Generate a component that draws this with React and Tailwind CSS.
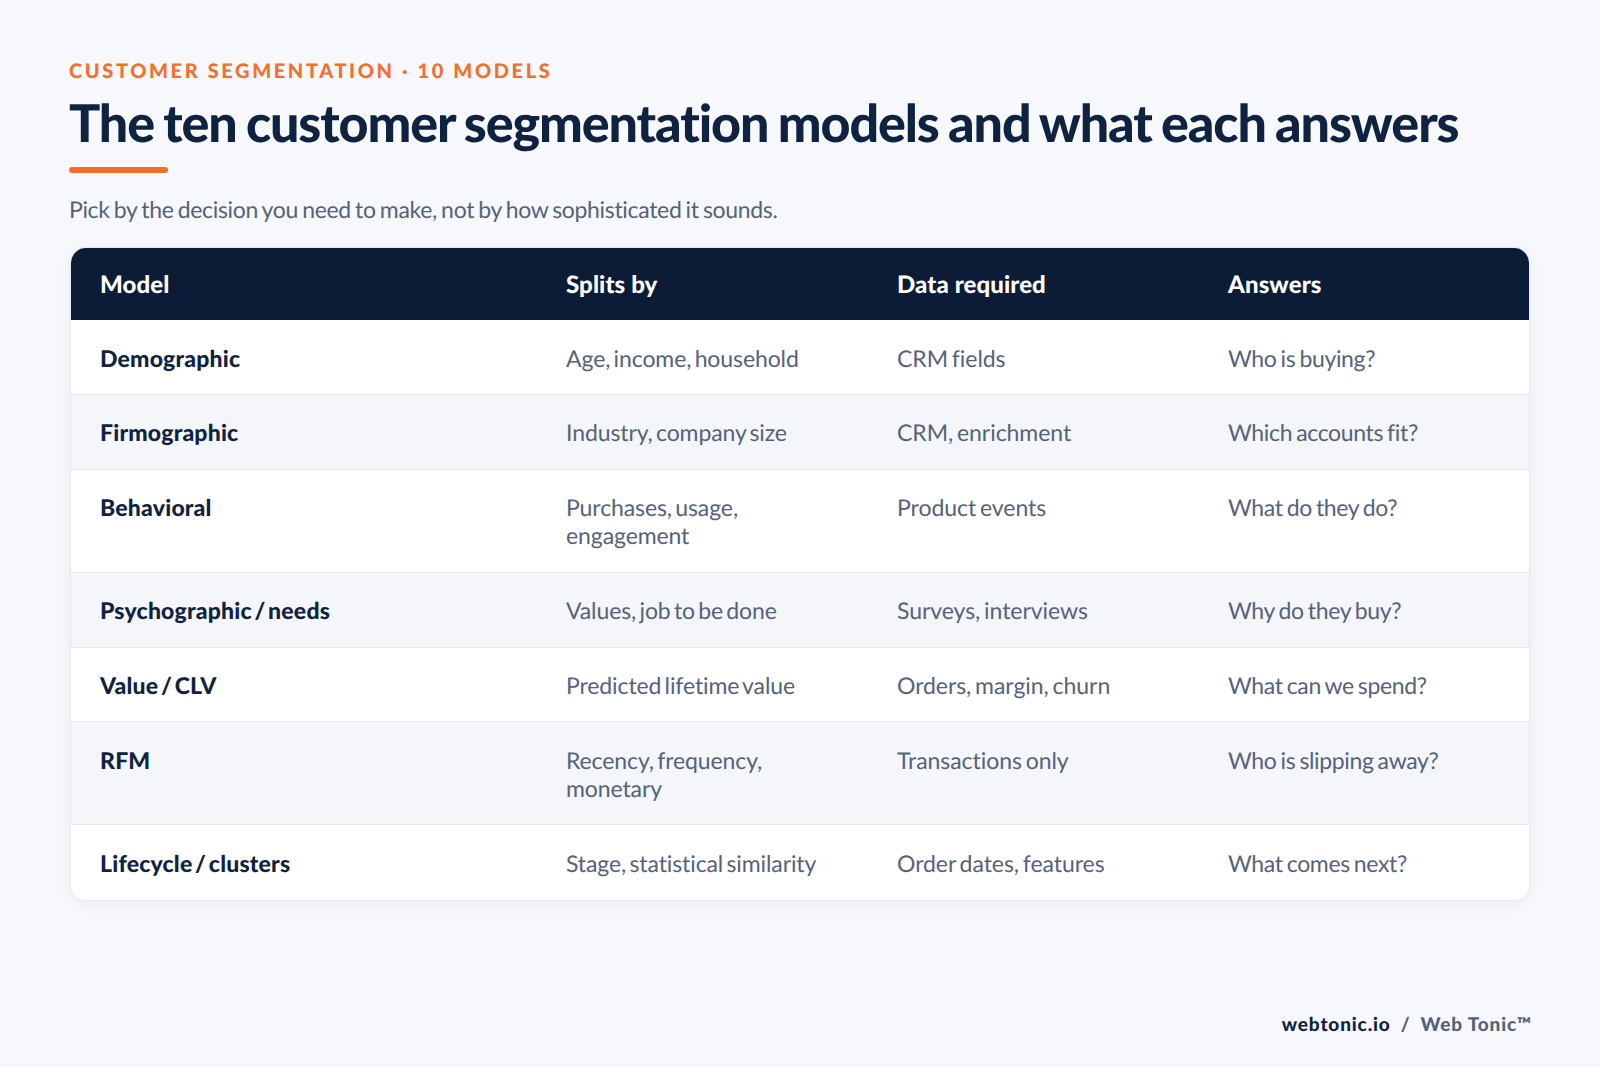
const rows = [
  ['Demographic', 'Age, income, household', 'CRM fields', 'Who is buying?'],
  ['Firmographic', 'Industry, company size', 'CRM, enrichment', 'Which accounts fit?'],
  ['Behavioral', 'Purchases, usage, engagement', 'Product events', 'What do they do?'],
  ['Psychographic / needs', 'Values, job to be done', 'Surveys, interviews', 'Why do they buy?'],
  ['Value / CLV', 'Predicted lifetime value', 'Orders, margin, churn', 'What can we spend?'],
  ['RFM', 'Recency, frequency, monetary', 'Transactions only', 'Who is slipping away?'],
  ['Lifecycle / clusters', 'Stage, statistical similarity', 'Order dates, features', 'What comes next?'],
];

// text widths differ per column in the reference
const cellFits = [
  'tracking-[-0.1px] [word-spacing:-2.5px]',
  'tracking-[-0.05px] [word-spacing:-2px]',
  'tracking-[-0.35px] [word-spacing:-1.5px]',
];

export default function App() {
  return (
    <div className="min-h-[1067px] bg-[#f6f8fb] px-[69px] pt-[59px] font-['Lato',sans-serif] relative [text-rendering:geometricPrecision]">
      <div className="text-[20px] leading-[25px] font-black tracking-[2.6px] text-[#f36f2e]">
        CUSTOMER SEGMENTATION · 10 MODELS
      </div>
      <h1 className="mt-[7px] text-[52px] leading-[64px] font-black tracking-[-1.1px] [word-spacing:-2px] text-[#0f2340] whitespace-nowrap">
        The ten customer segmentation models and what each answers
      </h1>
      <div className="mt-[12px] h-[6px] w-[99px] rounded-full bg-[#f36f2e]" />
      <p className="mt-[21px] text-[23px] leading-[30px] tracking-[-0.32px] [word-spacing:-1.4px] text-[#55637a]">
        Pick by the decision you need to make, not by how sophisticated it sounds.
      </p>

      <div className="mt-[23px] mx-px overflow-hidden rounded-[16px] border border-[#e4e8f0] bg-white shadow-[0_4px_16px_rgba(15,35,64,0.05)]">
        <table className="w-full table-fixed border-collapse text-left">
          <colgroup>
            <col className="w-[466px]" />
            <col className="w-[331px]" />
            <col className="w-[331px]" />
            <col />
          </colgroup>
          <thead>
            <tr className="bg-[#0c1c36] text-white">
              {['Model', 'Splits by', 'Data required', 'Answers'].map((h) => (
                <th key={h} className="h-[72px] px-[29px] pt-[2px] text-[24px] font-black tracking-[0.1px]">
                  {h}
                </th>
              ))}
            </tr>
          </thead>
          <tbody>
            {rows.map((row, i) => (
              <tr key={row[0]} className={`border-b ${i % 2 === 1 ? 'bg-[#f4f6fa]' : 'bg-white'} ${i < rows.length - 1 ? 'border-[#e4e8f0]' : 'border-white'}`}>
                <td className="px-[29px] pt-[23.5px] pb-[22.4px] align-top text-[23px] leading-[28px] font-black tracking-[0.2px] [word-spacing:-3px] text-[#0f2340]">
                  {row[0]}
                </td>
                {row.slice(1).map((cell, c) => (
                  <td key={cell} className={`px-[29px] pt-[23.5px] pb-[22.4px] align-top text-[23px] leading-[28px] text-[#55637a] ${cellFits[c]}`}>
                    {cell}
                  </td>
                ))}
              </tr>
            ))}
          </tbody>
        </table>
      </div>

      <div className="absolute right-[68px] bottom-[28px] text-[19px] font-black tracking-[0.85px] whitespace-nowrap">
        <span className="text-[#0f2340]">webtonic.io</span>
        <span className="mx-[10px] text-[#55637a]">/</span>
        <span className="text-[#55637a]">Web Tonic™</span>
      </div>
    </div>
  );
}
